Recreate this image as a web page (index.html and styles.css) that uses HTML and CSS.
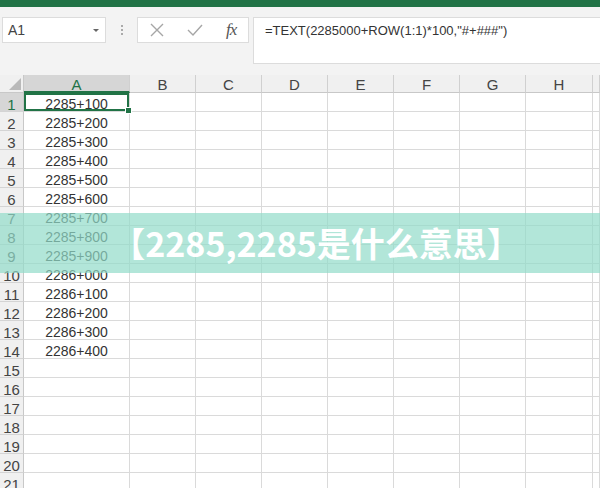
FILE: index.html
```html
<!DOCTYPE html>
<html lang="zh-CN">

<head>
    <meta charset="UTF-8">
    <meta name="viewport" content="width=device-width, initial-scale=1.0">
    <title>2285,2285是什么意思</title>
    <link rel="stylesheet" href="styles.css">
</head>

<body>
    <div class="ribbon-edge"></div>

    <div class="formula-bar">
        <div class="name-box">
            <span>A1</span>
            <span class="caret"></span>
        </div>
        <div class="grip"><i></i><i></i><i></i></div>
        <div class="fx-box">
            <svg class="icon" width="16" height="16" viewBox="0 0 16 16">
                <path d="M2 2 L14 14 M14 2 L2 14" stroke="#a6a6a6" stroke-width="1.4" fill="none"/>
            </svg>
            <svg class="icon" width="18" height="16" viewBox="0 0 18 16">
                <path d="M2 8 L7 13 L16 3" stroke="#a6a6a6" stroke-width="1.4" fill="none"/>
            </svg>
            <span class="fx">fx</span>
        </div>
        <div class="formula-input">=TEXT(2285000+ROW(1:1)*100,"#+###")</div>
    </div>

    <div class="sheet" id="sheet"></div>

    <div class="banner">【2285,2285是什么意思】</div>

    <script>
        const cols = ['A', 'B', 'C', 'D', 'E', 'F', 'G', 'H', ''];
        const values = [
            '2285+100', '2285+200', '2285+300', '2285+400', '2285+500',
            '2285+600', '2285+700', '2285+800', '2285+900', '2286+000',
            '2286+100', '2286+200', '2286+300', '2286+400'
        ];

        let html = '<div class="corner"></div>';
        cols.forEach((c, i) => {
            html += `<div class="col-head${i === 0 ? ' active' : ''}">${c}</div>`;
        });

        for (let r = 1; r <= 21; r++) {
            html += `<div class="row-head${r === 1 ? ' active' : ''}">${r}</div>`;
            cols.forEach((c, i) => {
                let cls = 'cell';
                let text = '';
                if (i === 0) {
                    text = values[r - 1] || '';
                    if (r === 1) cls += ' selected';
                }
                html += `<div class="${cls}">${text}</div>`;
            });
        }

        document.getElementById('sheet').innerHTML = html;
    </script>
</body>

</html>
```

FILE: styles.css
```css
/* Global */
body {
    margin: 0;
    font-family: "Liberation Sans", "Noto Sans CJK SC", sans-serif;
    color: #333;
    background: #fff;
    width: 600px;
    height: 488px;
    overflow: hidden;
    position: relative;
}

.ribbon-edge {
    height: 7px;
    background-color: #217346;
}

/* Formula bar */
.formula-bar {
    height: 68px;
    box-sizing: border-box;
    padding-top: 10px;
    background-color: #f3f3f3;
    display: flex;
    align-items: flex-start;
}

.name-box {
    margin-left: 2px;
    width: 104px;
    height: 26px;
    box-sizing: border-box;
    background: #fff;
    border: 1px solid #dcdcdc;
    display: flex;
    align-items: center;
    justify-content: space-between;
    padding: 0 6px 0 5px;
    font-size: 14px;
    color: #444;
}

.caret {
    width: 0;
    height: 0;
    border-left: 3px solid transparent;
    border-right: 3px solid transparent;
    border-top: 3px solid #666;
}

.grip {
    width: 31px;
    height: 26px;
    display: flex;
    flex-direction: column;
    align-items: center;
    justify-content: center;
    gap: 2px;
}

.grip i {
    width: 2px;
    height: 2px;
    background: #aaa;
}

.fx-box {
    width: 112px;
    height: 26px;
    box-sizing: border-box;
    background: #fff;
    border: 1px solid #dcdcdc;
    display: flex;
    align-items: center;
    padding-left: 11px;
    gap: 21px;
}

.fx {
    font-family: "Liberation Serif", serif;
    font-style: italic;
    font-size: 17px;
    color: #555;
    letter-spacing: -1px;
    margin-left: 1px;
}

.formula-input {
    margin-left: 4px;
    flex: 1;
    height: 47px;
    box-sizing: border-box;
    background: #fff;
    border: 1px solid #dcdcdc;
    border-right: none;
    padding: 5px 0 0 11px;
    font-size: 13px;
    color: #333;
}

/* Sheet grid */
.sheet {
    display: grid;
    grid-template-columns: 24px 106px 66px 66px 66px 66px 66px 66px 67px 1fr;
    grid-auto-rows: 19px;
    grid-template-rows: 18px;
}

.corner {
    background: #f0f0f0;
    border-right: 1px solid #c8c8c8;
    border-bottom: 1px solid #c8c8c8;
    position: relative;
}

.corner::after {
    content: "";
    position: absolute;
    right: 2px;
    bottom: 2px;
    width: 0;
    height: 0;
    border-left: 12px solid transparent;
    border-bottom: 12px solid #b9b9b9;
}

.col-head {
    background: #f0f0f0;
    border-right: 1px solid #d0d0d0;
    border-bottom: 1px solid #c8c8c8;
    font-size: 15px;
    color: #444;
    text-align: center;
    line-height: 20px;
}

.col-head.active {
    background: #d6d6d6;
    border-bottom: 2px solid #217346;
    color: #217346;
}

.row-head {
    background: #f0f0f0;
    border-right: 1px solid #c8c8c8;
    border-bottom: 1px solid #d4d4d4;
    font-size: 15px;
    color: #444;
    text-align: center;
    line-height: 23px;
    overflow: hidden;
}

.row-head.active {
    background: #d6d6d6;
    color: #217346;
}

.cell {
    border-right: 1px solid #dadada;
    border-bottom: 1px solid #dadada;
    font-size: 14px;
    color: #333;
    text-align: center;
    line-height: 23px;
}

.cell.selected {
    position: relative;
    box-shadow: inset 0 0 0 2px #217346;
}

.cell.selected::after {
    content: "";
    position: absolute;
    right: -3px;
    bottom: -3px;
    width: 5px;
    height: 5px;
    background: #217346;
    border: 1px solid #fff;
}

/* Title overlay */
.banner {
    position: absolute;
    left: 0;
    right: 0;
    top: 213px;
    height: 60px;
    padding-left: 32px;
    background: rgba(146, 219, 201, 0.7);
    color: #fff;
    font-family: "Noto Sans CJK SC", sans-serif;
    font-weight: 700;
    font-size: 34px;
    line-height: 60px;
    text-align: center;
}
```
